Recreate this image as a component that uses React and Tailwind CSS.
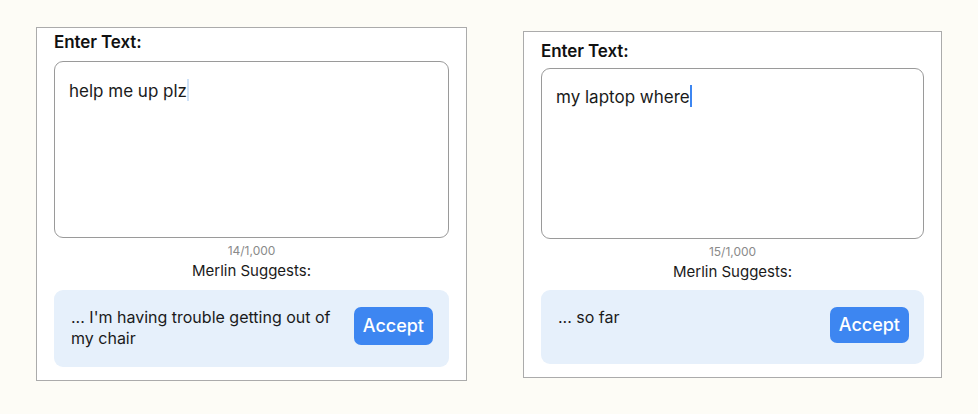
import React from 'react';

const font = { fontFamily: 'Inter, "Noto Sans", sans-serif' };

const Panel = ({ text, count, suggestion, cursor, className, boxClass, suggestClass, btnClass }) => (
  <div className={`bg-white border border-[#ababab] flex flex-col px-[17px] ${className}`}>
    <h2 className="font-semibold text-[17px] leading-[20px] text-[#111] tracking-[-0.1px]">Enter Text:</h2>
    <div className={`rounded-[9px] border border-[#9a9a9a] bg-white px-[14px] ${boxClass}`}>
      <p className="text-[17px] leading-[22px] text-[#1a1a1a]">
        {text}
        <span className={`inline-block align-[-4px] w-[2px] h-[22px] ${cursor}`} />
      </p>
    </div>
    <p className="text-center text-[12px] leading-[14px] text-[#8a8a8a] mt-[6px]">{count}</p>
    <p className="text-center text-[15px] leading-[18px] text-[#1a1a1a] mt-[4px]">Merlin Suggests:</p>
    <div className={`rounded-[9px] bg-[#e6f0fb] flex items-start justify-between ${suggestClass}`}>
      <p className="text-[16px] leading-[21px] text-[#1a1a1a] flex-1">{suggestion}</p>
      <button className={`bg-[#3d86f1] text-white text-[18px] leading-[22px] font-medium rounded-[7px] px-[9px] shrink-0 ${btnClass}`}>
        Accept
      </button>
    </div>
  </div>
);

export default function App() {
  return (
    <div className="w-[978px] h-[414px] bg-[#fdfcf6] flex items-start pl-[36px] pt-[27px] gap-[56px]" style={font}>
      <Panel
        className="w-[431px] h-[354px] pt-[4px]"
        boxClass="mt-[9px] h-[177px] pt-[17px]"
        suggestClass="mt-[10px] h-[77px] pl-[17px] pr-[16px] pt-[17px]"
        btnClass="py-[8px]"
        text="help me up plz"
        count="14/1,000"
        suggestion={<>... I'm having trouble getting out of<br />my chair</>}
        cursor="bg-[#cfe2f7]"
      />
      <Panel
        className="w-[419px] h-[347px] mt-[4px] pt-[9px]"
        boxClass="mt-[7px] h-[171px] pt-[16px]"
        suggestClass="mt-[9px] h-[74px] pl-[17px] pr-[15px] pt-[17px]"
        btnClass="py-[7px]"
        text="my laptop where"
        count="15/1,000"
        suggestion="... so far"
        cursor="bg-[#3d86f1]"
      />
    </div>
  );
}
